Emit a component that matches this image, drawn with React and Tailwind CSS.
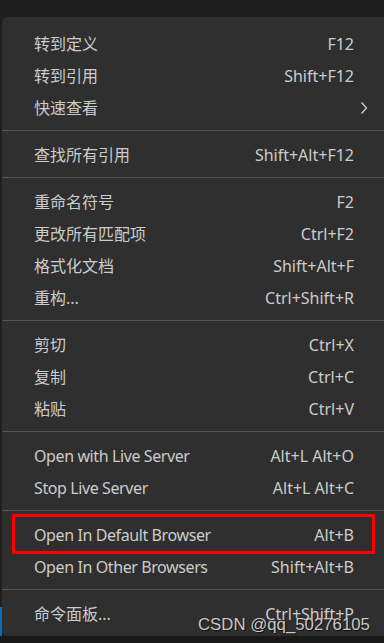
import React from "react";

// context menu entries, null = separator
const items = [
  { label: "转到定义", key: "F12" },
  { label: "转到引用", key: "Shift+F12" },
  { label: "快速查看", sub: true },
  null,
  { label: "查找所有引用", key: "Shift+Alt+F12" },
  null,
  { label: "重命名符号", key: "F2" },
  { label: "更改所有匹配项", key: "Ctrl+F2" },
  { label: "格式化文档", key: "Shift+Alt+F" },
  { label: "重构...", key: "Ctrl+Shift+R" },
  null,
  { label: "剪切", key: "Ctrl+X" },
  { label: "复制", key: "Ctrl+C" },
  { label: "粘贴", key: "Ctrl+V" },
  null,
  { label: "Open with Live Server", key: "Alt+L Alt+O" },
  { label: "Stop Live Server", key: "Alt+L Alt+C" },
  null,
  { label: "Open In Default Browser", key: "Alt+B" },
  { label: "Open In Other Browsers", key: "Shift+Alt+B" },
  null,
  { label: "命令面板...", key: "Ctrl+Shift+P" },
];

const Chevron = () => (
  <svg width="8" height="14" viewBox="0 0 8 14" fill="none" className="-mr-[14px]">
    <path d="M1.5 1.5 L6.5 7 L1.5 12.5" stroke="#cccccc" strokeWidth="1.3" />
  </svg>
);

const MenuRow = ({ item }) => {
  // latin labels run a bit narrower in the original font
  const latin = /^[\x00-\x7f]+$/.test(item.label);
  return (
    <div className="flex h-[32px] items-center justify-between pl-[32px] pr-[48px] pt-[2px] text-[#cccccc]">
      <span className={latin ? "tracking-[-0.4px]" : ""}>{item.label}</span>
      {item.sub ? <Chevron /> : <span>{item.key}</span>}
    </div>
  );
};

const App = () => {
  return (
    <div
      className="relative h-[643px] w-[384px] overflow-hidden bg-[#1f1f1f] text-[16px] leading-none"
      style={{ fontFamily: '"Segoe UI", "Noto Sans", "Noto Sans CJK SC", sans-serif' }}
    >
      {/* editor backdrop with the menu on top */}
      <div className="pl-[2px] pt-[17px]">
        <div className="w-[400px] rounded-[6px] bg-[#2f2f2f] pb-[7px] pt-[10px]">
          {items.map((item, i) =>
            item ? (
              <MenuRow key={i} item={item} />
            ) : (
              <div key={i} className="my-[7px] h-px bg-[#555555]" />
            )
          )}
        </div>
      </div>

      {/* bits of the window behind */}
      <div className="absolute left-0 top-[607px] h-[30px] w-[2px] bg-[#0e6ab3]" />
      <div className="absolute bottom-0 left-0 h-[7px] w-full bg-[#181818]" />

      {/* highlight annotation */}
      <div className="absolute left-[12px] top-[514px] h-[40px] w-[363px] border-[3px] border-[#ff0000]" />

      {/* watermark */}
      <div
        className="absolute left-[198px] top-[617px] text-[16.8px] leading-none text-[#c8c8c8] [text-shadow:1px_1px_1px_rgba(0,0,0,0.7)]"
        style={{ fontFamily: '"Liberation Sans", Arial, sans-serif' }}
      >
        CSDN @qq_50276105
      </div>
    </div>
  );
};

export default App;
